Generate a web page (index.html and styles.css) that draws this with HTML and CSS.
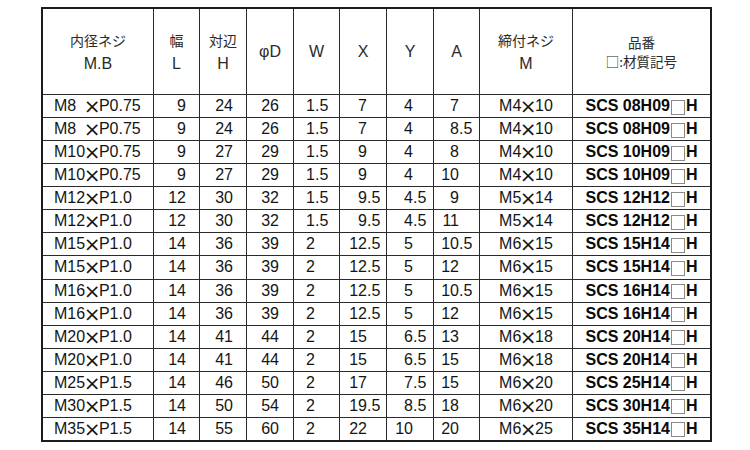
FILE: index.html
```html
<!DOCTYPE html>
<html lang="ja">
<head>
<meta charset="utf-8">
<title>SCS</title>
<link rel="stylesheet" href="styles.css">
</head>
<body>
<div class="wrap">
<div class="tbl">
  <div class="c h"><span class="jp">内径ネジ</span><span>M.B</span></div>
  <div class="c h"><span class="jp jp2">幅</span><span>L</span></div>
  <div class="c h"><span class="jp">対辺</span><span>H</span></div>
  <div class="c h"><span>φD</span></div>
  <div class="c h"><span>W</span></div>
  <div class="c h"><span>X</span></div>
  <div class="c h"><span>Y</span></div>
  <div class="c h"><span>A</span></div>
  <div class="c h"><span class="jp">締付ネジ</span><span>M</span></div>
  <div class="c h hp"><span class="jp">品番</span><span class="jp">□:材質記号</span></div>

  <div class="c mb">M8&#8199;<span class="x">×</span>P0.75</div><div class="c n L"><span class="i">9</span></div><div class="c n H"><span class="i">24</span></div><div class="c n D"><span class="i">26</span></div><div class="c n W"><span class="i">1</span>.5</div><div class="c n X"><span class="i">7</span></div><div class="c n Y"><span class="i">4</span></div><div class="c n A"><span class="i">7</span></div><div class="c m">M4<span class="x">×</span>10</div><div class="c p">SCS 08H09<span class="box"></span>H</div>
  <div class="c mb">M8&#8199;<span class="x">×</span>P0.75</div><div class="c n L"><span class="i">9</span></div><div class="c n H"><span class="i">24</span></div><div class="c n D"><span class="i">26</span></div><div class="c n W"><span class="i">1</span>.5</div><div class="c n X"><span class="i">7</span></div><div class="c n Y"><span class="i">4</span></div><div class="c n A"><span class="i">8</span>.5</div><div class="c m">M4<span class="x">×</span>10</div><div class="c p">SCS 08H09<span class="box"></span>H</div>
  <div class="c mb">M10<span class="x">×</span>P0.75</div><div class="c n L"><span class="i">9</span></div><div class="c n H"><span class="i">27</span></div><div class="c n D"><span class="i">29</span></div><div class="c n W"><span class="i">1</span>.5</div><div class="c n X"><span class="i">9</span></div><div class="c n Y"><span class="i">4</span></div><div class="c n A"><span class="i">8</span></div><div class="c m">M4<span class="x">×</span>10</div><div class="c p">SCS 10H09<span class="box"></span>H</div>
  <div class="c mb">M10<span class="x">×</span>P0.75</div><div class="c n L"><span class="i">9</span></div><div class="c n H"><span class="i">27</span></div><div class="c n D"><span class="i">29</span></div><div class="c n W"><span class="i">1</span>.5</div><div class="c n X"><span class="i">9</span></div><div class="c n Y"><span class="i">4</span></div><div class="c n A"><span class="i">10</span></div><div class="c m">M4<span class="x">×</span>10</div><div class="c p">SCS 10H09<span class="box"></span>H</div>
  <div class="c mb">M12<span class="x">×</span>P1.0</div><div class="c n L"><span class="i">12</span></div><div class="c n H"><span class="i">30</span></div><div class="c n D"><span class="i">32</span></div><div class="c n W"><span class="i">1</span>.5</div><div class="c n X"><span class="i">9</span>.5</div><div class="c n Y"><span class="i">4</span>.5</div><div class="c n A"><span class="i">9</span></div><div class="c m">M5<span class="x">×</span>14</div><div class="c p">SCS 12H12<span class="box"></span>H</div>
  <div class="c mb">M12<span class="x">×</span>P1.0</div><div class="c n L"><span class="i">12</span></div><div class="c n H"><span class="i">30</span></div><div class="c n D"><span class="i">32</span></div><div class="c n W"><span class="i">1</span>.5</div><div class="c n X"><span class="i">9</span>.5</div><div class="c n Y"><span class="i">4</span>.5</div><div class="c n A"><span class="i">11</span></div><div class="c m">M5<span class="x">×</span>14</div><div class="c p">SCS 12H12<span class="box"></span>H</div>
  <div class="c mb">M15<span class="x">×</span>P1.0</div><div class="c n L"><span class="i">14</span></div><div class="c n H"><span class="i">36</span></div><div class="c n D"><span class="i">39</span></div><div class="c n W"><span class="i">2</span></div><div class="c n X"><span class="i">12</span>.5</div><div class="c n Y"><span class="i">5</span></div><div class="c n A"><span class="i">10</span>.5</div><div class="c m">M6<span class="x">×</span>15</div><div class="c p">SCS 15H14<span class="box"></span>H</div>
  <div class="c mb">M15<span class="x">×</span>P1.0</div><div class="c n L"><span class="i">14</span></div><div class="c n H"><span class="i">36</span></div><div class="c n D"><span class="i">39</span></div><div class="c n W"><span class="i">2</span></div><div class="c n X"><span class="i">12</span>.5</div><div class="c n Y"><span class="i">5</span></div><div class="c n A"><span class="i">12</span></div><div class="c m">M6<span class="x">×</span>15</div><div class="c p">SCS 15H14<span class="box"></span>H</div>
  <div class="c mb">M16<span class="x">×</span>P1.0</div><div class="c n L"><span class="i">14</span></div><div class="c n H"><span class="i">36</span></div><div class="c n D"><span class="i">39</span></div><div class="c n W"><span class="i">2</span></div><div class="c n X"><span class="i">12</span>.5</div><div class="c n Y"><span class="i">5</span></div><div class="c n A"><span class="i">10</span>.5</div><div class="c m">M6<span class="x">×</span>15</div><div class="c p">SCS 16H14<span class="box"></span>H</div>
  <div class="c mb">M16<span class="x">×</span>P1.0</div><div class="c n L"><span class="i">14</span></div><div class="c n H"><span class="i">36</span></div><div class="c n D"><span class="i">39</span></div><div class="c n W"><span class="i">2</span></div><div class="c n X"><span class="i">12</span>.5</div><div class="c n Y"><span class="i">5</span></div><div class="c n A"><span class="i">12</span></div><div class="c m">M6<span class="x">×</span>15</div><div class="c p">SCS 16H14<span class="box"></span>H</div>
  <div class="c mb">M20<span class="x">×</span>P1.0</div><div class="c n L"><span class="i">14</span></div><div class="c n H"><span class="i">41</span></div><div class="c n D"><span class="i">44</span></div><div class="c n W"><span class="i">2</span></div><div class="c n X"><span class="i">15</span></div><div class="c n Y"><span class="i">6</span>.5</div><div class="c n A"><span class="i">13</span></div><div class="c m">M6<span class="x">×</span>18</div><div class="c p">SCS 20H14<span class="box"></span>H</div>
  <div class="c mb">M20<span class="x">×</span>P1.0</div><div class="c n L"><span class="i">14</span></div><div class="c n H"><span class="i">41</span></div><div class="c n D"><span class="i">44</span></div><div class="c n W"><span class="i">2</span></div><div class="c n X"><span class="i">15</span></div><div class="c n Y"><span class="i">6</span>.5</div><div class="c n A"><span class="i">15</span></div><div class="c m">M6<span class="x">×</span>18</div><div class="c p">SCS 20H14<span class="box"></span>H</div>
  <div class="c mb">M25<span class="x">×</span>P1.5</div><div class="c n L"><span class="i">14</span></div><div class="c n H"><span class="i">46</span></div><div class="c n D"><span class="i">50</span></div><div class="c n W"><span class="i">2</span></div><div class="c n X"><span class="i">17</span></div><div class="c n Y"><span class="i">7</span>.5</div><div class="c n A"><span class="i">15</span></div><div class="c m">M6<span class="x">×</span>20</div><div class="c p">SCS 25H14<span class="box"></span>H</div>
  <div class="c mb">M30<span class="x">×</span>P1.5</div><div class="c n L"><span class="i">14</span></div><div class="c n H"><span class="i">50</span></div><div class="c n D"><span class="i">54</span></div><div class="c n W"><span class="i">2</span></div><div class="c n X"><span class="i">19</span>.5</div><div class="c n Y"><span class="i">8</span>.5</div><div class="c n A"><span class="i">18</span></div><div class="c m">M6<span class="x">×</span>20</div><div class="c p">SCS 30H14<span class="box"></span>H</div>
  <div class="c mb">M35<span class="x">×</span>P1.5</div><div class="c n L"><span class="i">14</span></div><div class="c n H"><span class="i">55</span></div><div class="c n D"><span class="i">60</span></div><div class="c n W"><span class="i">2</span></div><div class="c n X"><span class="i">22</span></div><div class="c n Y"><span class="i">10</span></div><div class="c n A"><span class="i">20</span></div><div class="c m">M6<span class="x">×</span>25</div><div class="c p">SCS 35H14<span class="box"></span>H</div>
</div>
</div>
</body>
</html>
```

FILE: styles.css
```css
html, body {
  margin: 0;
  background: #ffffff;
}
body {
  font-family: "Liberation Sans", Arial, "Noto Sans CJK JP", sans-serif;
  color: #151515;
  font-size: 16px;
}
.wrap {
  padding: 7px 0 0 41px;
}
.tbl {
  display: grid;
  width: max-content;
  grid-template-columns: 110px 45px 46px 46px 45px 46px 46px 45px 92px 137px;
  grid-template-rows: 85px repeat(15, 22.07px);
  gap: 1px;
  background: #2a2a2a;
  border: 2px solid #1c1c1c;
}
.c {
  background: #ffffff;
  display: flex;
  align-items: center;
  white-space: nowrap;
  line-height: 1;
}
.h {
  flex-direction: column;
  justify-content: center;
  color: #2a2a2a;
  line-height: 24px;
  font-size: 16px;
}
.h .jp {
  font-family: "Noto Sans CJK JP", sans-serif;
  font-size: 14px;
  color: #2a2a2a;
}
.h .jp2 {
  font-family: "Noto Sans CJK SC", "Noto Sans CJK JP", sans-serif;
  color: #262626;
}
.hp {
  line-height: 19px;
}
.hp .jp {
  font-size: 13.5px;
}
.mb {
  padding-left: 11px;
}
.x {
  font-family: "DejaVu Sans", sans-serif;
  font-size: 20px;
  margin: 0 -1.5px;
  line-height: 1;
}
.n .i {
  display: inline-block;
  text-align: right;
}
.L .i { width: 32px; }
.H .i { width: 33px; }
.D .i { width: 32px; }
.W .i { width: 21px; }
.X .i { width: 27px; }
.Y .i { width: 26px; }
.A .i { width: 25px; }
.m {
  justify-content: center;
}
.p {
  justify-content: center;
  font-weight: bold;
  color: #0a0a0a;
}
.box {
  display: inline-block;
  width: 12px;
  height: 13px;
  border: 1px solid #8a8a8a;
  margin: 0 1px 0 1px;
  position: relative;
  top: 1px;
}
```
